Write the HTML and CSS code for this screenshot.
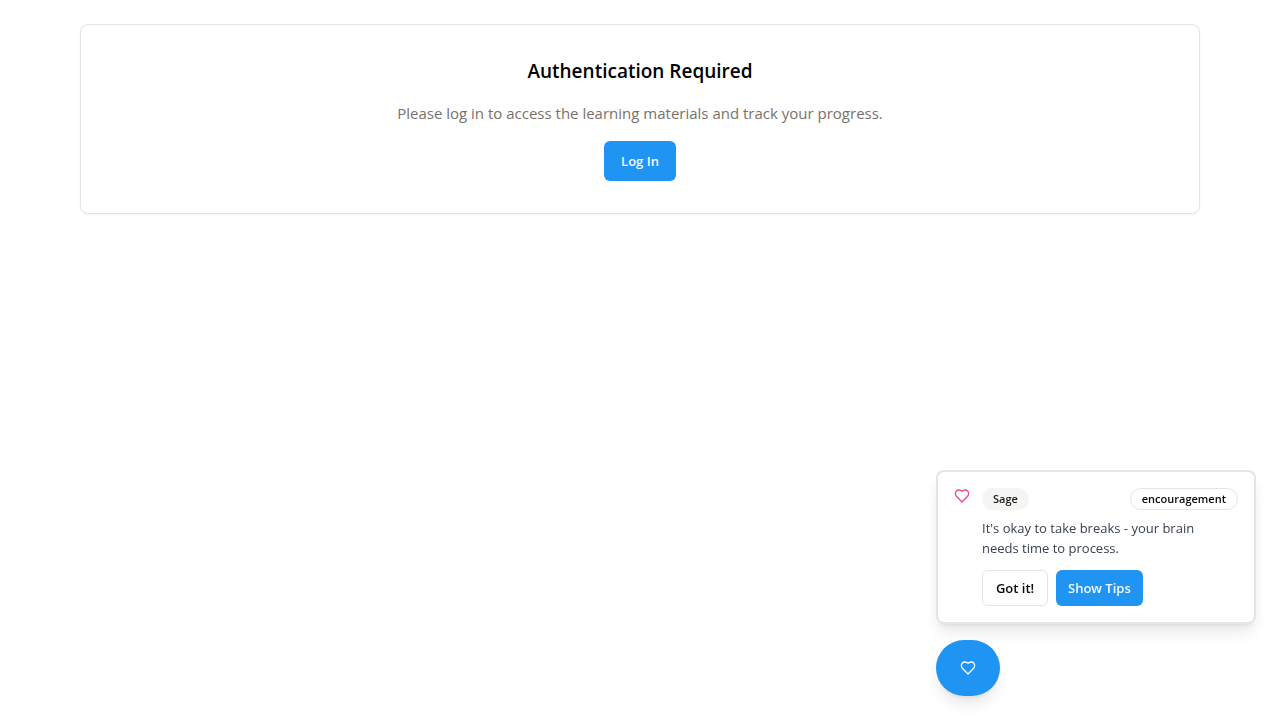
FILE: index.html
```html
<!DOCTYPE html>
<html lang="en">
<head>
<meta charset="utf-8">
<meta name="viewport" content="width=device-width, initial-scale=1">
<title>Authentication Required</title>
<link rel="stylesheet" href="styles.css">
</head>
<body>
<main class="page">
  <section class="auth-card">
    <h1 class="auth-title">Authentication Required</h1>
    <p class="auth-text">Please log in to access the learning materials and track your progress.</p>
    <button class="btn btn-primary btn-login" type="button">Log In</button>
  </section>
</main>
<aside class="companion">
  <div class="tip-card">
    <svg class="heart heart-pink" viewBox="0 0 24 24" aria-hidden="true"><path d="M19 14c1.49-1.46 3-3.21 3-5.5A5.5 5.5 0 0 0 16.5 3c-1.76 0-3 .5-4.5 2-1.5-1.5-2.74-2-4.5-2A5.5 5.5 0 0 0 2 8.5c0 2.3 1.5 4.05 3 5.5l7 7Z"/></svg>
    <div class="tip-body">
      <div class="tip-header">
        <span class="badge badge-muted">Sage</span>
        <span class="badge badge-outline">encouragement</span>
      </div>
      <p class="tip-text">It's okay to take breaks - your brain needs time to process.</p>
      <div class="tip-actions">
        <button class="btn btn-outline btn-small" type="button">Got it!</button>
        <button class="btn btn-primary btn-small" type="button">Show Tips</button>
      </div>
    </div>
  </div>
  <button class="fab" type="button" aria-label="Companion">
    <svg class="heart" viewBox="0 0 24 24" aria-hidden="true"><path d="M19 14c1.49-1.46 3-3.21 3-5.5A5.5 5.5 0 0 0 16.5 3c-1.76 0-3 .5-4.5 2-1.5-1.5-2.74-2-4.5-2A5.5 5.5 0 0 0 2 8.5c0 2.3 1.5 4.05 3 5.5l7 7Z"/></svg>
  </button>
</aside>
</body>
</html>
```
FILE: styles.css
```css
* { box-sizing: border-box; }
body {
  margin: 0;
  background: #fff;
  color: #0c0a09;
  font-family: "Segoe UI", "Open Sans", "Noto Sans", sans-serif;
}
h1, p { margin: 0; }
.page {
  max-width: 1168px;
  margin: 0 auto;
  padding: 24px;
}
.auth-card {
  display: flex;
  flex-direction: column;
  align-items: center;
  gap: 16px;
  padding: 32px;
  border: 1px solid #e5e5e5;
  border-radius: 8px;
  box-shadow: 0 1px 2px rgba(0, 0, 0, 0.05);
  text-align: center;
}
.auth-title {
  font-size: 19px;
  line-height: 28px;
  font-weight: 600;
  color: #000;
}
.auth-text {
  font-size: 15px;
  line-height: 24px;
  color: #78716c;
}
.btn {
  display: inline-flex;
  align-items: center;
  justify-content: center;
  border: 1px solid transparent;
  border-radius: 6px;
  font-family: inherit;
  font-size: 13px;
  line-height: 20px;
  font-weight: 600;
  white-space: nowrap;
  cursor: pointer;
}
.btn-primary {
  background: #2094f3;
  color: #f8fafc;
}
.btn-outline {
  background: #fff;
  border-color: #e5e5e5;
  color: #0c0a09;
}
.btn-login {
  height: 40px;
  padding: 0 16px;
}
.btn-small {
  min-width: 66px;
  height: 36px;
  padding: 0 11px;
}
.companion {
  position: fixed;
  right: 24px;
  bottom: 24px;
  display: flex;
  flex-direction: column;
  align-items: flex-start;
  gap: 16px;
  width: 320px;
}
.tip-card {
  display: flex;
  align-items: flex-start;
  gap: 12px;
  width: 100%;
  padding: 16px;
  border: 2px solid #e5e5e5;
  border-radius: 8px;
  background: #fff;
  box-shadow: 0 10px 15px -3px rgba(0, 0, 0, 0.1), 0 4px 6px -4px rgba(0, 0, 0, 0.1);
}
.heart {
  flex: none;
  width: 16px;
  height: 16px;
  fill: none;
  stroke: currentColor;
  stroke-width: 2;
  stroke-linecap: round;
  stroke-linejoin: round;
}
.heart-pink { color: #ec4899; }
.tip-body {
  flex: 1;
  min-width: 0;
}
.tip-header {
  display: flex;
  align-items: center;
  justify-content: space-between;
  margin-bottom: 8px;
}
.badge {
  padding: 2px 11px;
  border: 1px solid transparent;
  border-radius: 11px;
  font-size: 11px;
  line-height: 16px;
  font-weight: 600;
}
.badge-muted {
  padding: 2px 10px;
  background: #f5f5f4;
  color: #1c1917;
}
.badge-outline { border-color: #e5e5e5; }
.tip-text {
  margin-bottom: 12px;
  padding-right: 12px;
  font-size: 13px;
  line-height: 20px;
  color: #374151;
}
.tip-actions {
  display: flex;
  gap: 8px;
}
.fab {
  display: flex;
  align-items: center;
  justify-content: center;
  width: 64px;
  height: 56px;
  padding: 0;
  border: 0;
  border-radius: 28px;
  background: #2094f3;
  color: #f8fafc;
  box-shadow: 0 10px 15px -3px rgba(0, 0, 0, 0.1), 0 4px 6px -4px rgba(0, 0, 0, 0.1);
  cursor: pointer;
}
```
